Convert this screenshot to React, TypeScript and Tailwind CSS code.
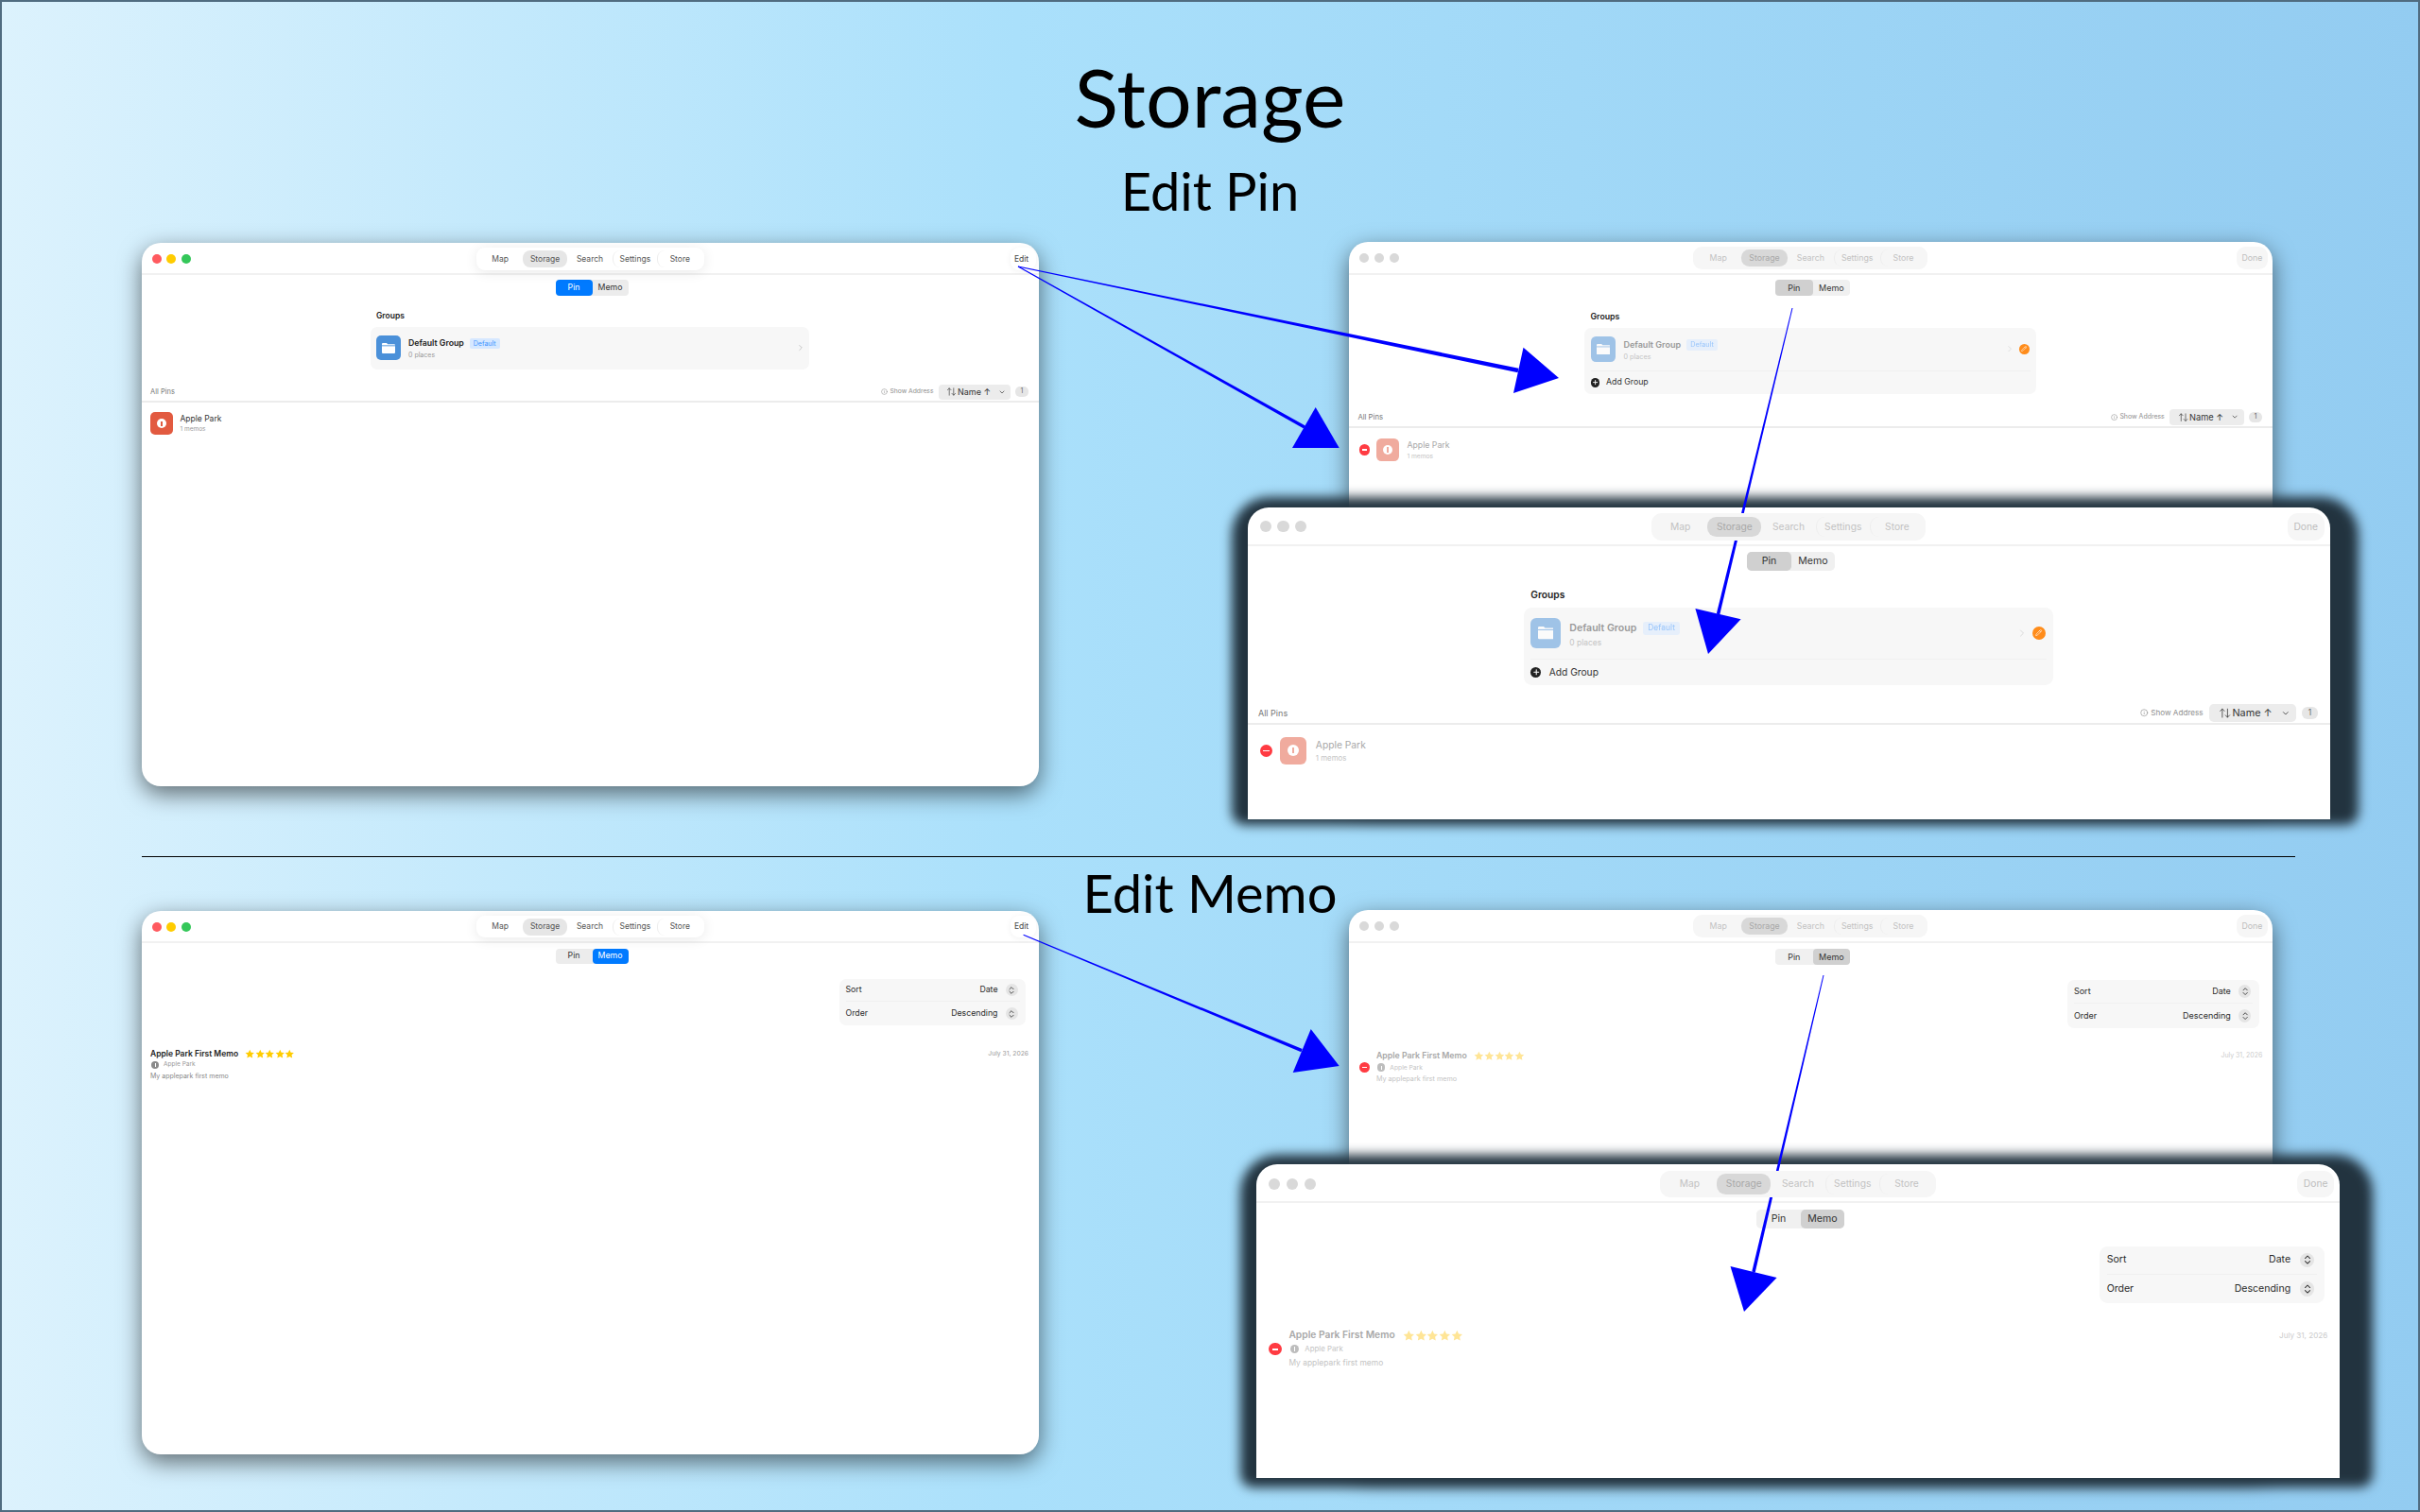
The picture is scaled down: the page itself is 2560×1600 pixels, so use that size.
import { ArrowUpDown, ChevronDown, ChevronRight, ChevronsUpDown, Info, Pencil, Plus } from "lucide-react";
import clsx from "clsx";

const NAV = ["Map", "Storage", "Search", "Settings", "Store"];

type Pt = [number, number];

function Arrow({ from, tail, head, width }: { from: Pt; tail: Pt; head: Pt[]; width: number }) {
  const dx = tail[0] - from[0];
  const dy = tail[1] - from[1];
  const len = Math.hypot(dx, dy);
  const nx = -dy / len;
  const ny = dx / len;
  const shaft = [
    [from[0] + nx * 0.5, from[1] + ny * 0.5],
    [tail[0] + (nx * width) / 2, tail[1] + (ny * width) / 2],
    [tail[0] - (nx * width) / 2, tail[1] - (ny * width) / 2],
    [from[0] - nx * 0.5, from[1] - ny * 0.5],
  ];
  return (
    <>
      <polygon points={shaft.map((p) => p.join(",")).join(" ")} fill="#0000ff" />
      <polygon points={head.map((p) => p.join(",")).join(" ")} fill="#0000ff" />
    </>
  );
}

function TitleBar({ editing }: { editing: boolean }) {
  return (
    <header className="grid h-[34px] grid-cols-[1fr_241px_1fr] items-center border-b-2 border-[#f1f1f1] pt-[2px]">
      <div className="flex gap-[5.5px] pl-[11px]">
        <span className={clsx("size-[10px] rounded-full", editing ? "bg-[#d9d9d9]" : "bg-[#ff5a5f]")} />
        <span className={clsx("size-[10px] rounded-full", editing ? "bg-[#d9d9d9]" : "bg-[#ffcc00]")} />
        <span className={clsx("size-[10px] rounded-full", editing ? "bg-[#d9d9d9]" : "bg-[#34c759]")} />
      </div>
      <nav
        className={clsx(
          "relative z-10 grid h-[23.5px] grid-cols-5 items-center rounded-[9px] px-[2px]",
          editing ? "bg-[#f6f6f6]" : "bg-white shadow-[0_2px_14px_rgba(0,0,0,0.09)]"
        )}
      >
        {NAV.map((item, i) => (
          <span
            key={item}
            className={clsx(
              "flex h-[18px] items-center justify-center rounded-[8px] text-[8.5px]",
              i === 1 && (editing ? "bg-[#d8d8d8] text-[#a8a8a8]" : "bg-[#e6e6e6] text-[#555555]"),
              i !== 1 && (editing ? "text-[#c2c2c2]" : "text-[#555555]"),
              i >= 3 && "border-l border-[#ededed]"
            )}
          >
            {item}
          </span>
        ))}
      </nav>
      <div className={clsx("flex justify-end", editing ? "pr-[5px]" : "pr-[3px]")}>
        <span
          className={clsx(
            "flex h-[23.5px] items-center justify-center rounded-[9px] text-[8.5px]",
            editing
              ? "w-[32px] bg-[#f6f6f6] text-[#bdbdbd]"
              : "w-[27px] bg-white pr-[3px] text-[#444444] shadow-[0_1px_6px_rgba(0,0,0,0.06)]"
          )}
        >
          {editing ? "Done" : "Edit"}
        </span>
      </div>
    </header>
  );
}

function Segment({ view, editing }: { view: "pin" | "memo"; editing: boolean }) {
  const on = editing ? "bg-[#d0d0d0] text-[#333333]" : "bg-[#007aff] text-white";
  const off = "text-[#333333]";
  return (
    <div
      className={clsx(
        "ml-[438px] flex h-[16.5px] w-[77px] rounded-[4px] text-[8.75px]",
        view === "memo" ? "mt-[6px]" : "mt-[5px]",
        editing ? "bg-[#f0f0f0]" : "bg-[#ececec]"
      )}
    >
      <span className={clsx("flex w-[39px] items-center justify-center rounded-[4px]", view === "pin" ? on : off)}>Pin</span>
      <span className={clsx("flex w-[38px] items-center justify-center rounded-[4px]", view === "memo" ? on : off)}>Memo</span>
    </div>
  );
}

function Minus() {
  return (
    <span className="flex size-[11px] shrink-0 items-center justify-center rounded-full bg-[#ff3b42]">
      <span className="h-[1.5px] w-[5.5px] bg-white" />
    </span>
  );
}

function FolderGlyph() {
  return (
    <svg width="14" height="11" viewBox="0 0 14 11">
      <path d="M1 0h4l1.2 1.2H13a1 1 0 0 1 1 1V10a1 1 0 0 1-1 1H1a1 1 0 0 1-1-1V1a1 1 0 0 1 1-1z" fill="#ffffff" />
      <rect x="0" y="2.4" width="14" height="0.9" fill="#4a90d9" />
    </svg>
  );
}

function PinView({ editing }: { editing: boolean }) {
  return (
    <>
      <section className="mx-auto mt-[15.5px] w-[464px]">
        <h3 className="h-[12px] pl-[6px] text-[8.5px] leading-[12px] font-semibold text-[#222222]">Groups</h3>
        <div className="mt-[5.5px] rounded-[7px] bg-[#f7f7f7] px-[6px]">
          <div className={clsx("flex h-[45px] items-center", editing && "border-b border-[#f0f0f0]")}>
            <span
              className={clsx(
                "flex size-[26px] items-center justify-center rounded-[5px] bg-[#4a90d9]",
                editing && "opacity-50"
              )}
            >
              <FolderGlyph />
            </span>
            <div className="ml-[8px] flex-1 pt-[3px]">
              <div className="flex items-center gap-[6px]">
                <span className={clsx("text-[8.75px] font-semibold", editing ? "text-[#9a9a9a]" : "text-[#222222]")}>
                  Default Group
                </span>
                <span
                  className={clsx(
                    "rounded-[2px] bg-[#d6e8ff] px-[4px] py-[1.5px] text-[7px] leading-[8px] text-[#3d95ff]",
                    editing && "opacity-50"
                  )}
                >
                  Default
                </span>
              </div>
              <div className={clsx("mt-[1px] text-[7px]", editing ? "text-[#c4c4c4]" : "text-[#9a9a9a]")}>0 places</div>
            </div>
            <ChevronRight
              size={10}
              strokeWidth={1.5}
              className={editing ? "text-[#d0d0d0]" : "-mr-[1.5px] text-[#aaaaaa]"}
            />
            {editing && (
              <span className="mr-[1px] ml-[4px] flex size-[11px] items-center justify-center rounded-full bg-[#ff8c1a]">
                <Pencil size={6} strokeWidth={2} className="text-white" />
              </span>
            )}
          </div>
          {editing && (
            <div className="flex h-[23px] items-center gap-[7px] text-[8.5px] text-[#333333]">
              <span className="flex size-[9px] items-center justify-center rounded-full bg-[#222222]">
                <Plus size={7} strokeWidth={3} className="text-white" />
              </span>
              Add Group
            </div>
          )}
        </div>
      </section>
      <div className="mt-[16px] flex h-[16px] items-center px-[9.5px] pr-[10.5px]">
        <span className="text-[7.5px] text-[#777777]">All Pins</span>
        <span className="ml-auto flex items-center gap-[2px] text-[6.75px] text-[#8e8e8e]">
          <Info size={7} strokeWidth={1.5} className="text-[#777777]" />
          Show Address
        </span>
        <span className="ml-[5.5px] flex h-[16px] w-[76px] items-center rounded-[4px] bg-[#ececec] pl-[8px] pr-[5px] text-[9px] text-[#333333]">
          <ArrowUpDown size={11} strokeWidth={1.4} />
          <span className="ml-[1px]">Name ↑</span>
          <ChevronDown size={8} strokeWidth={2} className="ml-auto" />
        </span>
        <span className="ml-[5px] flex h-[11px] w-[14px] items-center justify-center rounded-[5px] bg-[#e6e6e6] text-[7px] text-[#666666]">
          1
        </span>
      </div>
      <div className="mt-[1px] border-b-2 border-[#ececec]" />
      <div className={clsx("mt-[10.5px] flex items-center", editing ? "pl-[11px]" : "pl-[9.5px]")}>
        {editing && <Minus />}
        <span
          className={clsx(
            "flex h-[24px] w-[23.5px] items-center justify-center rounded-[5px] bg-[#e25a40]",
            editing && "ml-[6.5px] opacity-50"
          )}
        >
          <span className="flex size-[10px] items-center justify-center rounded-full bg-white">
            <span className="h-[5px] w-[1.5px] bg-[#e25a40]" />
          </span>
        </span>
        <div className="ml-[8px] pt-[1px]">
          <div className={clsx("text-[8.5px]", editing ? "text-[#a8a8a8]" : "text-[#333333]")}>Apple Park</div>
          <div className={clsx("text-[6.5px]", editing ? "text-[#c4c4c4]" : "text-[#999999]")}>1 memos</div>
        </div>
      </div>
    </>
  );
}

function Star({ className }: { className: string }) {
  return (
    <svg width="10.5" height="10.5" viewBox="0 0 24 24" className={className}>
      <path
        d="M12 1.5l3.2 6.9 7.5.9-5.5 5.2 1.4 7.4L12 18.3l-6.6 3.6 1.4-7.4L1.3 9.3l7.5-.9z"
        fill="currentColor"
      />
    </svg>
  );
}

function SortRow({ label, value, line }: { label: string; value: string; line?: boolean }) {
  return (
    <div className={clsx("flex h-[24.8px] items-center text-[8.75px] text-[#2a2a2a]", line && "border-b border-[#f0f0f0]")}>
      <span>{label}</span>
      <span className="ml-auto">{value}</span>
      <span className="mr-[2px] ml-[8px] flex size-[13px] items-center justify-center rounded-full bg-[#e5e5e5] text-[#333333]">
        <ChevronsUpDown size={10} strokeWidth={2} />
      </span>
    </div>
  );
}

function MemoView({ editing }: { editing: boolean }) {
  return (
    <>
      <div className="mt-[15.5px] flex justify-end pr-[13.5px]">
        <div className="w-[197px] rounded-[7px] bg-[#f7f7f7] px-[6.5px]">
          <SortRow label="Sort" value="Date" line />
          <SortRow label="Order" value="Descending" />
        </div>
      </div>
      <div className={clsx("flex items-center pr-[10.5px]", editing ? "mt-[22.5px] pl-[11px]" : "mt-[24px] pl-[9.5px]")}>
        {editing && <Minus />}
        <div className={clsx("flex-1", editing && "ml-[6.5px]")}>
          <div className="flex h-[12px] items-center">
            <span className={clsx("text-[8.5px] font-semibold", editing ? "text-[#a8a8a8]" : "text-[#222222]")}>
              Apple Park First Memo
            </span>
            <span className="ml-[7px] flex">
              {[0, 1, 2, 3, 4].map((n) => (
                <Star key={n} className={editing ? "text-[#ffe596]" : "text-[#ffcc00]"} />
              ))}
            </span>
            <span className={clsx("ml-auto text-[6.75px]", editing ? "text-[#cccccc]" : "text-[#999999]")}>July 31, 2026</span>
          </div>
          <div className="flex h-[12px] items-center">
            <span className={clsx("ml-[1px] flex size-[8px] items-center justify-center rounded-full", editing ? "bg-[#bdbdbd]" : "bg-[#8a8a8a]")}>
              <span className="h-[4px] w-[1px] bg-white" />
            </span>
            <span className={clsx("ml-[5px] text-[6.5px]", editing ? "text-[#c4c4c4]" : "text-[#999999]")}>Apple Park</span>
          </div>
          <div className={clsx("h-[12px] text-[7px] leading-[12px]", editing ? "text-[#c4c4c4]" : "text-[#888888]")}>
            My applepark first memo
          </div>
        </div>
      </div>
    </>
  );
}

function AppWindow({
  frame,
  zoom,
  view,
  editing = false,
}: {
  frame: string;
  zoom: string;
  view: "pin" | "memo";
  editing?: boolean;
}) {
  return (
    <div className={clsx("absolute overflow-hidden bg-white", frame)}>
      <div className={clsx("h-full w-[949px]", zoom)}>
        <TitleBar editing={editing} />
        <Segment view={view} editing={editing} />
        {view === "pin" ? <PinView editing={editing} /> : <MemoView editing={editing} />}
      </div>
    </div>
  );
}

export default function App() {
  const softShadow = "rounded-[20px] shadow-[0_8px_24px_rgba(0,0,0,0.55)]";
  return (
    <div className="relative h-[1600px] w-[2560px] overflow-hidden border-2 border-[#506c80] bg-[linear-gradient(90deg,#dcf2fd_0%,#aae0fb_42%,#93ccf1_100%)] font-[family-name:Inter,sans-serif]">
      <h1 className="absolute top-[50px] w-full text-center font-[family-name:Lato,sans-serif] text-[86px] leading-[100px] text-black">
        Storage
      </h1>
      <h2 className="absolute top-[165px] w-full text-center font-[family-name:Lato,sans-serif] text-[56px] leading-[70px] text-black">
        Edit Pin
      </h2>
      <h2 className="absolute top-[908px] w-full text-center font-[family-name:Lato,sans-serif] text-[56px] leading-[70px] text-black">
        Edit Memo
      </h2>
      <div className="absolute top-[904px] left-[148px] h-px w-[2278px] bg-black" />

      <AppWindow frame={clsx("top-[255px] left-[147.5px] h-[575px] w-[949px]", softShadow)} zoom="[zoom:1]" view="pin" />
      <AppWindow
        frame={clsx("top-[253.7px] left-[1424.6px] h-[592px] w-[977px]", softShadow)}
        zoom="[zoom:1.03]"
        view="pin"
        editing
      />
      <div className="absolute top-[524px] left-[1301px] h-[347px] w-[1192px] rounded-t-[40px] rounded-b-[14px] bg-[#22333f] blur-[6px]" />
      <AppWindow
        frame="top-[534.7px] left-[1317.5px] h-[330px] w-[1145px] rounded-t-[22px]"
        zoom="[zoom:1.2066]"
        view="pin"
        editing
      />

      <AppWindow frame={clsx("top-[961.7px] left-[147.5px] h-[575px] w-[949px]", softShadow)} zoom="[zoom:1]" view="memo" />
      <AppWindow
        frame={clsx("top-[960.7px] left-[1424.6px] h-[592px] w-[977px]", softShadow)}
        zoom="[zoom:1.03]"
        view="memo"
        editing
      />
      <div className="absolute top-[1220px] left-[1310px] h-[352px] w-[1198px] rounded-t-[40px] rounded-b-[14px] bg-[#22333f] blur-[6px]" />
      <AppWindow
        frame="top-[1230px] left-[1327px] h-[332px] w-[1146px] rounded-t-[22px]"
        zoom="[zoom:1.2076]"
        view="memo"
        editing
      />

      <svg className="absolute -top-[2px] -left-[2px]" width="2560" height="1600">
        <Arrow from={[1077, 282]} tail={[1606, 392]} head={[[1649, 400], [1611.5, 367.7], [1601, 416]]} width={4.5} />
        <Arrow from={[1077, 282]} tail={[1380, 452]} head={[[1416.7, 474], [1391.7, 431], [1367, 474]]} width={3.5} />
        <Arrow from={[1896, 326]} tail={[1817.5, 650]} head={[[1807, 692], [1793.4, 644], [1841.6, 655.3]]} width={3.5} />
        <Arrow from={[1082.6, 989.3]} tail={[1377, 1111.7]} head={[[1416.7, 1128], [1386.7, 1089], [1367.7, 1135]]} width={3.5} />
        <Arrow from={[1929, 1032]} tail={[1855, 1346]} head={[[1845, 1388], [1830.5, 1340], [1879.6, 1352]]} width={3.5} />
      </svg>
    </div>
  );
}
